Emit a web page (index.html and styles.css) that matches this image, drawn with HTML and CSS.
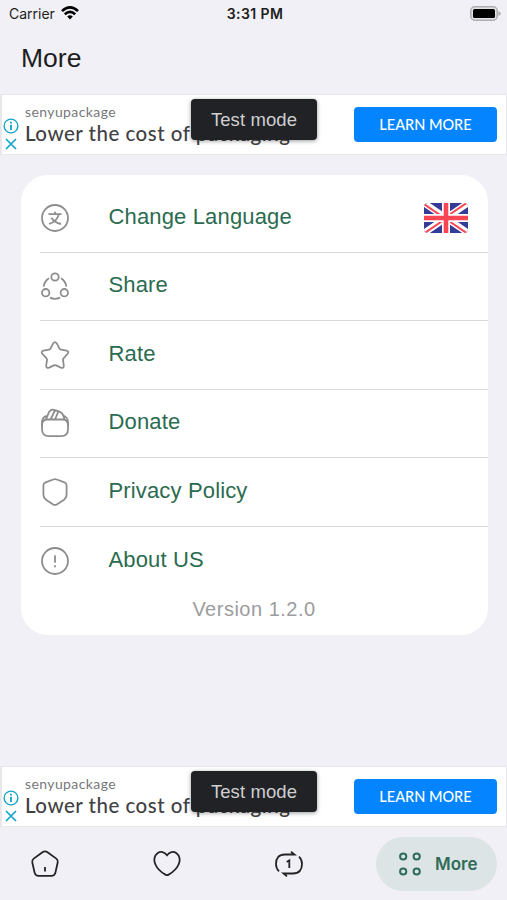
FILE: index.html
```html
<!DOCTYPE html>
<html lang="en">
<head>
    <meta charset="UTF-8">
    <meta name="viewport" content="width=device-width, initial-scale=1.0">
    <title>More</title>
    <link rel="stylesheet" href="styles.css">
</head>
<body>
    <div class="screen">
        <div class="status-bar">
            <div class="carrier">
                <span>Carrier</span>
                <svg width="18" height="14" viewBox="0 0 18 14" fill="none" stroke="#000" stroke-width="2.6">
                    <path d="M1 5.1Q9-2.2 17 5.1M3.8 8.2Q9 3.6 14.2 8.2"/>
                    <path d="M6.2 10.4Q9 8 11.8 10.4L9 13.4Z" fill="#000" stroke="none"/>
                </svg>
            </div>
            <div class="time">3:31 PM</div>
            <svg class="battery" width="31" height="15" viewBox="0 0 31 15">
                <rect x=".8" y=".8" width="26.4" height="13.4" rx="4" fill="#e4e4e8" stroke="#aeaeb0" stroke-width="1.5"/>
                <rect x="3" y="3" width="22" height="9" rx="1.5" fill="#000"/>
                <path d="M28.4 5Q30.8 6 30.8 7.5T28.4 10Z" fill="#aeaeb0"/>
            </svg>
        </div>

        <h1>More</h1>

        <div class="ad">
            <div class="ad-choices">
                <svg width="16" height="16" viewBox="0 0 16 16" fill="none" stroke="#12a5cb" stroke-width="1.4">
                    <circle cx="8" cy="8" r="6.9"/>
                    <path d="M8 6.8V12M8 3.7V5.4" stroke-width="1.8"/>
                </svg>
                <svg width="16" height="16" viewBox="0 0 16 16" fill="none" stroke="#12a5cb" stroke-width="1.7">
                    <path d="M3 3L13 13M13 3L3 13"/>
                </svg>
            </div>
            <div class="ad-text">
                <div class="ad-brand">senyupackage</div>
                <div class="ad-title">Lower the cost of packaging</div>
            </div>
            <button class="ad-button">LEARN MORE</button>
            <div class="test-mode">Test mode</div>
        </div>

        <div class="card">
            <div class="row">
                <svg class="icon" viewBox="0 0 30 30">
                    <circle cx="15" cy="15" r="13"/>
                    <path d="M8.5 11.2H21.5M15 8.8V11.2M18.8 11.4Q17 18.6 9 21M11.3 14.7Q14.5 19.5 21 21"/>
                </svg>
                <span class="label">Change Language</span>
                <svg class="flag" width="44" height="30" viewBox="0 0 44 30">
                    <clipPath id="flagShape"><rect width="44" height="30" rx="4"/></clipPath>
                    <g clip-path="url(#flagShape)">
                        <path d="M0 0H44V30H0Z" fill="#343c98"/>
                        <path d="M0 0L44 30M44 0L0 30" stroke="#fff" stroke-width="6.5"/>
                        <path d="M-1 0.4L21 15.4M22 16L44 31M44 -1L22 14M22 15.5L0 30.5" stroke="#fa4654" stroke-width="2"/>
                        <path d="M22 0V30M0 15H44" stroke="#fff" stroke-width="8"/>
                        <path d="M22 0V30M0 15H44" stroke="#fa4654" stroke-width="4.6"/>
                    </g>
                </svg>
            </div>
            <div class="row">
                <svg class="icon" viewBox="0 0 30 30">
                    <circle cx="15" cy="6" r="3.7"/>
                    <circle cx="5.7" cy="21.7" r="3.7"/>
                    <circle cx="24.3" cy="21.7" r="3.7"/>
                    <path d="M9 7.2Q4.2 10.4 3.7 15.7M21 7.2Q25.8 10.4 26.3 15.7M10 26.6Q15 29 20 26.6"/>
                </svg>
                <span class="label">Share</span>
            </div>
            <div class="row">
                <svg class="icon" viewBox="0 0 30 30">
                    <path d="M13.2 3.4Q15 .7 16.8 3.4L19.6 8.7Q20 9.5 21 9.7L26.6 10.7Q29.4 11.6 27.5 14L23.5 18.3Q22.9 19 23 19.9L23.8 25.7Q23.7 28.7 20.8 27.6L16.2 25.4Q15 24.8 13.8 25.4L9.2 27.6Q6.3 28.7 6.2 25.7L7 19.9Q7.1 19 6.5 18.3L2.5 14Q.6 11.6 3.4 10.7L9 9.7Q10 9.5 10.4 8.7Z"/>
                </svg>
                <span class="label">Rate</span>
            </div>
            <div class="row">
                <svg class="icon" viewBox="0 0 30 30">
                    <path d="M7.5 11.5H22.5Q28 11.5 28 17V21Q28 28.2 21 28.2H9Q2 28.2 2 21V17Q2 11.5 7.5 11.5Z"/>
                    <path d="M2 18V14.5Q2 9.5 6.5 7.8M28 18V14.5Q28 9.5 23 7.3M6 11.5L8.5 5.2Q10.5 .8 14 1.8L19.5 3.7Q23.5 5.2 24.3 11.5M10.6 11.5L14.8 2.5M15 11.5L18.3 3.6"/>
                </svg>
                <span class="label">Donate</span>
            </div>
            <div class="row">
                <svg class="icon" viewBox="0 0 30 30">
                    <path d="M13.2 2.5Q15 1.7 16.8 2.5L24.5 5.4Q26.6 6.2 26.6 8.5V17.5Q26.6 20.8 24 22.8L17.2 27.2Q15 28.6 12.8 27.2L6 22.8Q3.4 20.8 3.4 17.5V8.5Q3.4 6.2 5.5 5.4Z"/>
                </svg>
                <span class="label">Privacy Policy</span>
            </div>
            <div class="row">
                <svg class="icon" viewBox="0 0 30 30">
                    <circle cx="15" cy="15" r="13"/>
                    <path d="M15 9.2V16.7M15 19.2V21.2"/>
                </svg>
                <span class="label">About US</span>
            </div>
            <div class="version">Version 1.2.0</div>
        </div>

        <div class="ad ad-bottom">
            <div class="ad-choices">
                <svg width="16" height="16" viewBox="0 0 16 16" fill="none" stroke="#12a5cb" stroke-width="1.4">
                    <circle cx="8" cy="8" r="6.9"/>
                    <path d="M8 6.8V12M8 3.7V5.4" stroke-width="1.8"/>
                </svg>
                <svg width="16" height="16" viewBox="0 0 16 16" fill="none" stroke="#12a5cb" stroke-width="1.7">
                    <path d="M3 3L13 13M13 3L3 13"/>
                </svg>
            </div>
            <div class="ad-text">
                <div class="ad-brand">senyupackage</div>
                <div class="ad-title">Lower the cost of packaging</div>
            </div>
            <button class="ad-button">LEARN MORE</button>
            <div class="test-mode">Test mode</div>
        </div>

        <nav class="tabs">
            <a class="tab">
                <svg class="tab-icon" viewBox="0 0 30 30">
                    <path d="M12.5 3.2Q15 1.4 17.5 3.2L26.3 9.6Q28.3 11.2 27.7 13.5L25.4 23.6Q24.6 26.8 21.3 26.8H8.7Q5.4 26.8 4.6 23.6L2.3 13.5Q1.7 11.2 3.7 9.6ZM15 18V22.5"/>
                </svg>
            </a>
            <a class="tab">
                <svg class="tab-icon" viewBox="0 0 30 30">
                    <path d="M15 6.2C12.6 2.6 8.5 2 5.5 4.2C2.2 6.6 1.5 11.3 3.2 15C5.2 19.7 9.3 23.4 13.4 25.6Q15 26.5 16.6 25.6C20.7 23.4 24.8 19.7 26.8 15C28.5 11.3 27.8 6.6 24.5 4.2C21.5 2 17.4 2.6 15 6.2Z"/>
                </svg>
            </a>
            <a class="tab">
                <svg class="tab-icon" viewBox="0 0 30 30">
                    <path d="M5 22.3Q2 19.5 2 15Q2 5.5 11 5.5H20.5L17 2.6M25 7.7Q28 10.5 28 15Q28 24.5 19 24.5H9.5L13 27.4M12.7 12.9L15.3 11.3V19"/>
                </svg>
            </a>
            <a class="tab tab-active">
                <svg width="24" height="24" viewBox="0 0 24 24" fill="none" stroke="#2f6b59" stroke-width="2">
                    <circle cx="5.2" cy="4.5" r="3.1"/>
                    <circle cx="18.7" cy="4.5" r="3.1"/>
                    <circle cx="5.2" cy="19.5" r="3.1"/>
                    <circle cx="18.7" cy="19.5" r="3.1"/>
                </svg>
                <span>More</span>
            </a>
        </nav>
    </div>
</body>
</html>
```

FILE: styles.css
```css
body {
    margin: 0;
    background-color: #f1f0f6;
    font-family: "Liberation Sans", Arial, Helvetica, sans-serif;
    color: #1d1d20;
}
.screen {
    display: flex;
    flex-direction: column;
    width: 507px;
    height: 900px;
    overflow: hidden;
}
.status-bar {
    display: grid;
    grid-template-columns: 1fr auto 1fr;
    align-items: center;
    height: 26px;
    padding: 0 6px 0 9px;
    box-sizing: border-box;
    font-family: Inter, sans-serif;
    font-size: 14px;
}
.carrier {
    display: flex;
    align-items: center;
    gap: 6px;
}
.time {
    font-weight: 600;
    letter-spacing: 0.4px;
}
.battery {
    justify-self: end;
}
h1 {
    height: 68px;
    margin: 0;
    padding-left: 21px;
    box-sizing: border-box;
    font-size: 26.5px;
    font-weight: 400;
    line-height: 64px;
}
.ad {
    position: relative;
    display: flex;
    flex-shrink: 0;
    height: 61px;
    box-sizing: border-box;
    border: 1.5px solid #e8e8ec;
    border-left-width: 2px;
    background-color: #fff;
}
.ad-choices {
    display: flex;
    flex-direction: column;
    gap: 2px;
    width: 23px;
    padding: 23px 0 0 1px;
    box-sizing: border-box;
}
.ad-choices svg {
    display: block;
}
.ad-text {
    flex: 1;
    white-space: nowrap;
}
.ad-brand {
    margin-top: 8px;
    font-family: Lato, sans-serif;
    font-size: 14px;
    line-height: 18px;
    letter-spacing: 0.4px;
    color: #77777a;
}
.ad-title {
    font-family: Lato, sans-serif;
    font-size: 20.5px;
    font-weight: 500;
    line-height: 24px;
    letter-spacing: 0.5px;
    color: #414144;
}
.ad-button {
    width: 143px;
    height: 35px;
    margin: 12px 9px 0 0;
    padding: 0;
    border: none;
    border-radius: 4px;
    background-color: #0485ff;
    color: #fff;
    font-family: Lato, sans-serif;
    font-size: 14.5px;
    font-weight: 500;
    line-height: 34px;
}
.test-mode {
    position: absolute;
    top: 4px;
    left: 189px;
    width: 126px;
    height: 41px;
    border-radius: 4px;
    background-color: #202226;
    box-shadow: 0 1px 4px rgba(0, 0, 0, 0.4);
    color: #cfcfd2;
    font-size: 18.5px;
    line-height: 42px;
    letter-spacing: 0.1px;
    text-align: center;
}
.card {
    height: 460px;
    margin: 20px 19.5px 0 20.5px;
    padding: 9px 0 0 19.5px;
    box-sizing: border-box;
    border-radius: 27px;
    background-color: #fff;
}
.row {
    display: flex;
    align-items: center;
    height: 68.5px;
    box-sizing: border-box;
    border-bottom: 1.5px solid #d9d9dc;
}
.row:nth-of-type(6) {
    border-bottom: none;
}
.icon {
    width: 30px;
    height: 30px;
    fill: none;
    stroke: #8d8d8d;
    stroke-width: 1.8;
}
.label {
    margin: -2px 0 0 38.5px;
    font-size: 22px;
    letter-spacing: 0.15px;
    color: #2b6b50;
}
.flag {
    margin: 1px 19.5px 0 auto;
}
.version {
    margin: 2px 19.5px 0 0;
    font-size: 20px;
    line-height: 24px;
    letter-spacing: 0.5px;
    text-align: center;
    color: #9c9c9e;
}
.ad-bottom {
    margin-top: auto;
}
.tabs {
    display: flex;
    align-items: center;
    flex-shrink: 0;
    height: 73px;
    padding: 0 10px 0 30px;
}
.tab {
    display: flex;
    flex: none;
    align-items: center;
    width: 122px;
}
.tab:nth-child(3) {
    width: 30px;
}
.tab-icon {
    width: 30px;
    height: 30px;
    fill: none;
    stroke: #242427;
    stroke-width: 1.8;
}
.tab-active {
    gap: 13px;
    width: 121px;
    height: 54px;
    margin-left: auto;
    padding-left: 22px;
    box-sizing: border-box;
    border-radius: 27px;
    background-color: #dde4e5;
    color: #2f6b59;
    font-family: Inter, sans-serif;
    font-size: 17px;
    font-weight: 600;
}
```
